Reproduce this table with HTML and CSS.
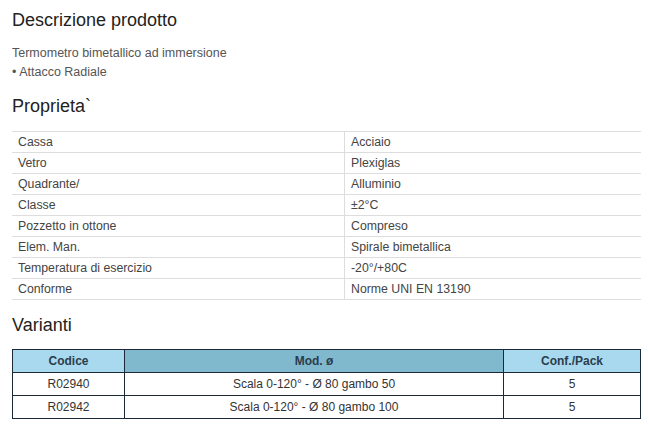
FILE: index.html
```html
<!DOCTYPE html>
<html lang="it">
<head>
<meta charset="utf-8">
<title>Descrizione prodotto</title>
<link rel="stylesheet" href="styles.css">
</head>
<body>
<div class="page">
  <h2 class="title">Descrizione prodotto</h2>
  <p class="desc">Termometro bimetallico ad immersione<br>• Attacco Radiale</p>

  <h2 class="title">Proprieta`</h2>
  <table class="props">
    <tr><td>Cassa</td><td>Acciaio</td></tr>
    <tr><td>Vetro</td><td>Plexiglas</td></tr>
    <tr><td>Quadrante/</td><td>Alluminio</td></tr>
    <tr><td>Classe</td><td>±2°C</td></tr>
    <tr><td>Pozzetto in ottone</td><td>Compreso</td></tr>
    <tr><td>Elem. Man.</td><td>Spirale bimetallica</td></tr>
    <tr><td>Temperatura di esercizio</td><td>-20°/+80C</td></tr>
    <tr><td>Conforme</td><td>Norme UNI EN 13190</td></tr>
  </table>

  <h2 class="title">Varianti</h2>
  <table class="variants">
    <thead>
      <tr><th class="c-code">Codice</th><th class="c-mod">Mod. ø</th><th class="c-pack">Conf./Pack</th></tr>
    </thead>
    <tbody>
      <tr><td>R02940</td><td>Scala 0-120° - Ø 80 gambo 50</td><td>5</td></tr>
      <tr><td>R02942</td><td>Scala 0-120° - Ø 80 gambo 100</td><td>5</td></tr>
    </tbody>
  </table>
</div>
</body>
</html>
```
FILE: styles.css
```css
html, body {
  margin: 0;
  padding: 0;
  background: #ffffff;
}
body {
  font-family: "Liberation Sans", Arial, sans-serif;
  color: #444;
}
.page {
  padding: 8px 8px 0 12px;
  width: 629px;
}
.title {
  font-size: 18px;
  font-weight: normal;
  line-height: 24px;
  color: #222;
  margin: 0;
}
.desc {
  font-size: 12.5px;
  line-height: 19px;
  color: #555;
  margin: 12px 0 12px;
}
.props {
  width: 629px;
  border-collapse: collapse;
  margin: 13px 0 13px;
  font-size: 12.3px;
  color: #444;
}
.props td {
  border-top: 1px solid #dddddd;
  border-bottom: 1px solid #dddddd;
  height: 20px;
  padding: 0 6px;
  line-height: 20px;
}
.props td:first-child {
  width: 320px;
}
.props td + td {
  border-left: 1px solid #dddddd;
}
.variants {
  width: 629px;
  border-collapse: collapse;
  margin-top: 12px;
  font-size: 12px;
  color: #333;
  border: 1px solid #1c2a38;
}
.variants th,
.variants td {
  border: 1px solid #1c2a38;
  height: 22px;
  padding: 0;
  text-align: center;
  line-height: 22px;
}
.variants th {
  font-weight: bold;
  color: #2b3d4c;
}
.c-code { width: 111px; background: #a8d9ef; }
.c-mod { background: #80b8cd; }
.c-pack { width: 136px; background: #a8d9ef; }
```
